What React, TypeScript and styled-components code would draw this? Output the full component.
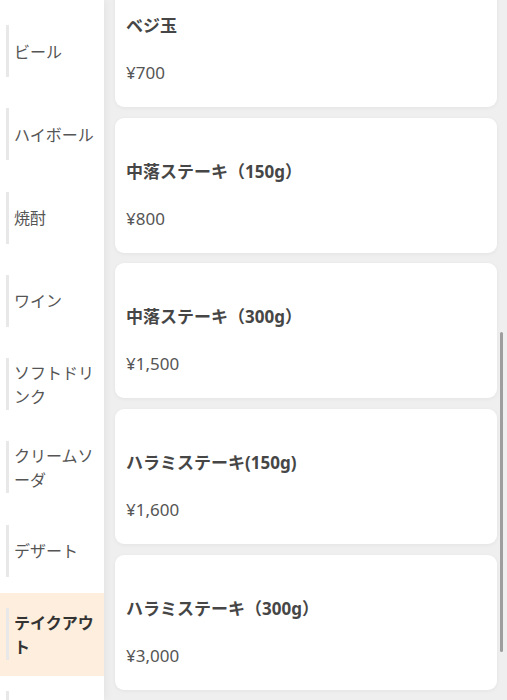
import React from "react";
import styled, { createGlobalStyle } from "styled-components";

const Global = createGlobalStyle`
  html, body { margin: 0; padding: 0; }
  body {
    font-family: "Noto Sans", "Noto Sans CJK JP", sans-serif;
    background: #efefef;
  }
  * { box-sizing: border-box; }
`;

const Page = styled.div`
  display: flex;
  width: 507px;
  height: 700px;
  overflow: hidden;
  position: relative;
  background: #efefef;
`;

const Sidebar = styled.nav`
  width: 104px;
  flex-shrink: 0;
  height: 100%;
  overflow: hidden;
  background: #ffffff;
  box-shadow: 2px 0 8px rgba(0, 0, 0, 0.05);
  position: relative;
  z-index: 1;
`;

const CategoryList = styled.ul`
  list-style: none;
  margin: 10px 0 0 0;
  padding: 0;
  display: flex;
  flex-direction: column;
`;

const Category = styled.li<{ $active?: boolean }>`
  height: 83.3px;
  flex-shrink: 0;
  padding: 15px 8px 16px 6px;
  background: ${(p) => (p.$active ? "#fdeedd" : "transparent")};
`;

const CategoryLabel = styled.div<{ $active?: boolean }>`
  height: 52px;
  border-left: 3px solid #e8e8e8;
  padding: 1px 0 0 5px;
  display: flex;
  align-items: center;
  font-size: 16px;
  line-height: 24px;
  color: ${(p) => (p.$active ? "#333333" : "#555555")};
  font-weight: ${(p) => (p.$active ? 700 : 400)};
  word-break: break-all;
`;

const Content = styled.main`
  flex: 1;
  height: 100%;
  overflow: hidden;
  padding: 0 10px 0 11px;
`;

const CardList = styled.div`
  display: flex;
  flex-direction: column;
  gap: 10.7px;
  margin-top: -28px;
`;

const Card = styled.div`
  height: 135px;
  flex-shrink: 0;
  background: #ffffff;
  border-radius: 9px;
  box-shadow: 0 1px 4px rgba(0, 0, 0, 0.05);
  padding: 42px 11px 0 11px;
  display: flex;
  flex-direction: column;
`;

const ItemName = styled.div`
  font-size: 17px;
  line-height: 24px;
  font-weight: 700;
  color: #464646;
  white-space: nowrap;
`;

const ItemPrice = styled.div`
  margin-top: 23px;
  font-size: 17px;
  line-height: 24px;
  color: #555555;
`;

const Scrollbar = styled.div`
  position: absolute;
  right: 4px;
  top: 332px;
  width: 3px;
  height: 320px;
  border-radius: 2px;
  background: #9e9e9e;
  z-index: 2;
`;

const categories = [
  "ビール",
  "ハイボール",
  "焼酎",
  "ワイン",
  "ソフトドリンク",
  "クリームソーダ",
  "デザート",
  "テイクアウト",
  "",
];

const items = [
  { name: "ベジ玉", price: "¥700" },
  { name: "中落ステーキ（150g）", price: "¥800" },
  { name: "中落ステーキ（300g）", price: "¥1,500" },
  { name: "ハラミステーキ(150g)", price: "¥1,600" },
  { name: "ハラミステーキ（300g）", price: "¥3,000" },
];

export default function App() {
  return (
    <>
      <Global />
      <Page>
        <Sidebar>
          <CategoryList>
            {categories.map((c, i) => (
              <Category key={i} $active={c === "テイクアウト"}>
                <CategoryLabel $active={c === "テイクアウト"}>{c}</CategoryLabel>
              </Category>
            ))}
          </CategoryList>
        </Sidebar>
        <Content>
          <CardList>
            {items.map((it) => (
              <Card key={it.name}>
                <ItemName>{it.name}</ItemName>
                <ItemPrice>{it.price}</ItemPrice>
              </Card>
            ))}
          </CardList>
        </Content>
        <Scrollbar />
      </Page>
    </>
  );
}
